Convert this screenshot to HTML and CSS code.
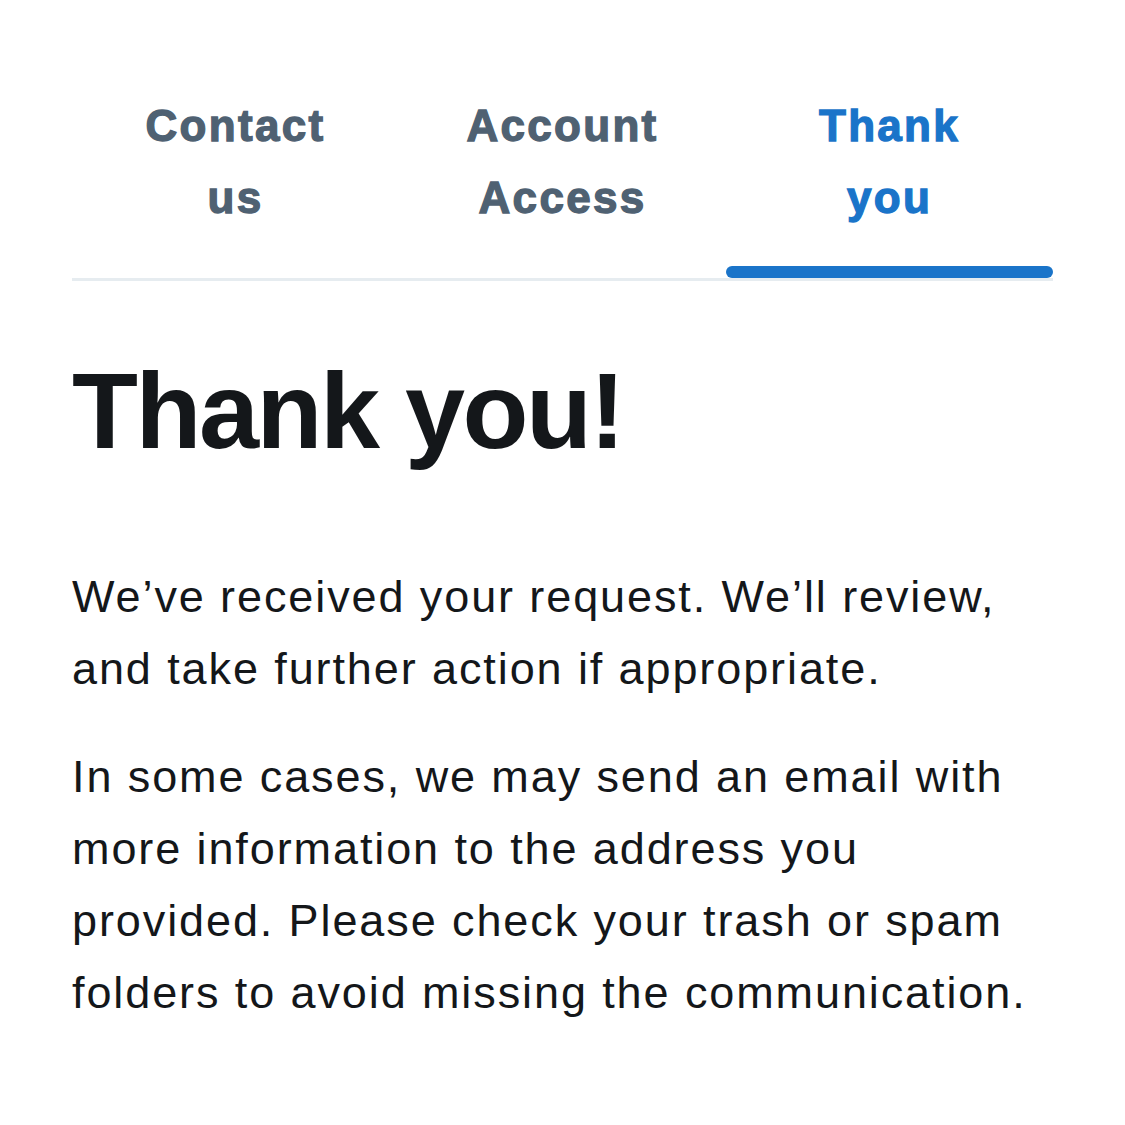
FILE: index.html
```html
<!DOCTYPE html>
<html>
<head>
<meta charset="utf-8">
<link rel="stylesheet" href="styles.css">
</head>
<body>
<div class="page">
  <nav class="tabs">
    <div class="tab">Contact<br>us</div>
    <div class="tab">Account<br>Access</div>
    <div class="tab active">Thank<br>you</div>
  </nav>
  <h1 class="title">Thank you!</h1>
  <p class="text">We’ve received your request. We’ll review, and take further action if appropriate.</p>
  <p class="text">In some cases, we may send an email with more information to the address you provided. Please check your trash or spam folders to avoid missing the communication.</p>
</div>
</body>
</html>
```
FILE: styles.css
```css
html, body {
  margin: 0;
  padding: 0;
  background: #ffffff;
}
.page {
  padding: 90px 72px 0 72px;
  font-family: "Liberation Sans", Arial, sans-serif;
}
.tabs {
  display: grid;
  grid-template-columns: 1fr 1fr 1fr;
  border-bottom: 3px solid #e6ecf0;
}
.tab {
  position: relative;
  text-align: center;
  font-size: 44px;
  line-height: 72px;
  font-weight: 700;
  letter-spacing: 2.3px;
  -webkit-text-stroke: 1.3px currentColor;
  color: #4f6172;
  padding-bottom: 44px;
}
.tab.active {
  color: #1a74c9;
}
.tab.active::after {
  content: "";
  position: absolute;
  left: 0;
  right: 0;
  bottom: 0;
  height: 12px;
  border-radius: 6px;
  background: #1a74c9;
}
.title {
  margin: 70px 0 0 0;
  font-size: 108px;
  line-height: 120px;
  font-weight: 700;
  color: #14171a;
  letter-spacing: -2.5px;
}
.text {
  margin: 90px 0 0 0;
  font-size: 45px;
  line-height: 72px;
  letter-spacing: 1.9px;
  color: #14171a;
}
.text + .text {
  margin-top: 36px;
}
```
